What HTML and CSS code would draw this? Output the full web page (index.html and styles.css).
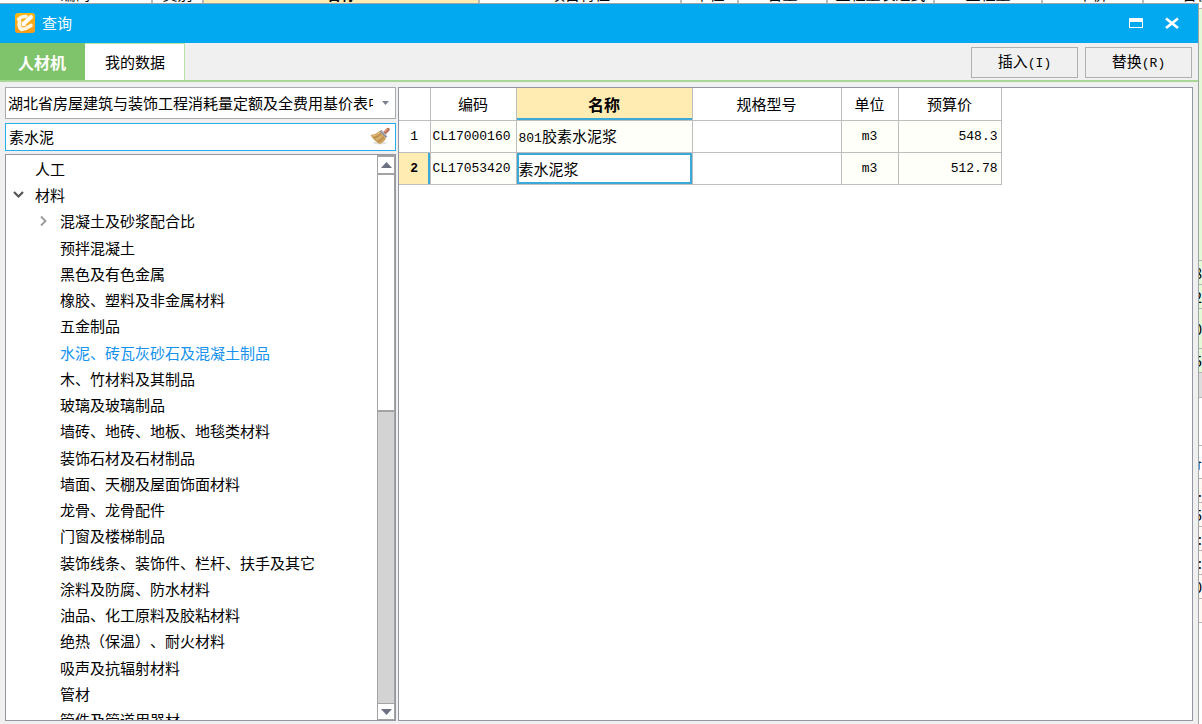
FILE: index.html
```html
<!DOCTYPE html>
<html lang="zh-CN">
<head>
<meta charset="utf-8">
<title>查询</title>
<link rel="stylesheet" href="styles.css">
</head>
<body>
<div class="desktop">
  <div class="sheet-head" aria-hidden="true">
    <span class="w-code">编码</span><span class="w-kind">类别</span><span class="w-name active">名称</span><span class="w-feature">项目特征</span><span class="w-unit">单位</span><span class="w-amount">含量</span><span class="w-expr">工程量表达式</span><span class="w-qty">工程量</span><span class="w-price">单价</span><span class="w-total">合价</span>
  </div>
  <div class="workspace">
    <section class="dialog" aria-labelledby="dialog-title">
      <header class="titlebar">
        <svg class="app-icon" viewBox="0 0 20 20" aria-hidden="true">
          <defs><linearGradient id="g" x1="0" y1="0" x2="0" y2="1"><stop offset="0" stop-color="#fdb813"/><stop offset="1" stop-color="#f79a1c"/></linearGradient></defs>
          <rect width="20" height="20" rx="3" fill="url(#g)"/>
          <path d="M11 3.500Q7 3 3.500 6Q5.500 8 4 12Q4.500 15 6.500 16.500Q11 16 16 12.500" fill="none" stroke="#fff6e0" stroke-width="3.600" stroke-linecap="round" stroke-linejoin="round"/>
          <path d="M9 10.500L16 4" stroke="#fff" stroke-width="4" stroke-linecap="round"/>
          <path d="M7 8.500l-.5 5 5-1z" fill="#fff"/>
        </svg>
        <h1 id="dialog-title">查询</h1>
        <div class="window-buttons">
          <button type="button" aria-label="最大化"><svg viewBox="0 0 14 14"><path d="M0 2h14v10H0zM1 6v5h12V6z" fill="#fff" fill-rule="evenodd"/></svg></button>
          <button type="button" aria-label="关闭"><svg viewBox="0 0 14 14"><path d="M1 2.500l12 9.500M13 2.500l-12 9.500" stroke="#fff" stroke-width="2.800"/></svg></button>
        </div>
      </header>
      <nav class="toolbar">
        <button type="button" class="tab selected">人材机</button>
        <button type="button" class="tab">我的数据</button>
        <div class="actions">
          <button type="button">插入<span class="mono">(I)</span></button>
          <button type="button">替换<span class="mono">(R)</span></button>
        </div>
      </nav>
      <main class="content">
        <aside class="sidebar">
          <div class="combo">
            <select aria-label="定额库"><option>湖北省房屋建筑与装饰工程消耗量定额及全费用基价表中</option></select>
            <svg class="caret" viewBox="0 0 7 4" aria-hidden="true"><path d="M0 0h7L3.500 4z" fill="#7c8090"/></svg>
          </div>
          <div class="search">
            <input type="text" value="素水泥" aria-label="搜索">
            <button type="button" aria-label="清除">
              <svg viewBox="0 0 20 20">
                <ellipse cx="10" cy="16" rx="7" ry="1.500" fill="#e2e2e2"/>
                <path d="M14 6.500L18 2.500" stroke="#b86a50" stroke-width="3.400" stroke-linecap="round"/>
                <path d="M14.500 5l3-3" stroke="#dda080" stroke-width="1.200"/>
                <path d="M.5 8Q6 7.500 9.500 4L16 11Q14.500 15 9.500 17Q4 14 .5 8z" fill="#cda05c"/>
                <path d="M4 11q4-1 7-4.500M8 14.500q4-1.500 6-4.500" stroke="#a87d42" fill="none" stroke-width=".7"/>
                <path d="M2.500 9q4-.5 7.500-3.500M6 12.500q4-1.500 6.500-4.500" stroke="#e6c387" fill="none"/>
                <path d="M10.500 3.500l6 6.500" stroke="#858a92" stroke-width="2.200"/>
                <path d="M11.200 3.500l5.300 5.500" stroke="#d3d6da"/>
              </svg>
            </button>
          </div>
          <div class="tree-box">
            <ul class="tree">
              <li>人工</li>
              <li class="branch"><svg class="arrow" viewBox="0 0 12 12" aria-hidden="true"><path d="M1 3l4.500 4.500L10 3" fill="none" stroke="#555" stroke-width="2.200"/></svg>材料</li>
              <li class="sub"><svg class="arrow" viewBox="0 0 12 12" aria-hidden="true"><path d="M3 1.500L7.500 6 3 10.500" fill="none" stroke="#999" stroke-width="1.800"/></svg>混凝土及砂浆配合比</li>
              <li class="sub">预拌混凝土</li>
              <li class="sub">黑色及有色金属</li>
              <li class="sub">橡胶、塑料及非金属材料</li>
              <li class="sub">五金制品</li>
              <li class="sub current">水泥、砖瓦灰砂石及混凝土制品</li>
              <li class="sub">木、竹材料及其制品</li>
              <li class="sub">玻璃及玻璃制品</li>
              <li class="sub">墙砖、地砖、地板、地毯类材料</li>
              <li class="sub">装饰石材及石材制品</li>
              <li class="sub">墙面、天棚及屋面饰面材料</li>
              <li class="sub">龙骨、龙骨配件</li>
              <li class="sub">门窗及楼梯制品</li>
              <li class="sub">装饰线条、装饰件、栏杆、扶手及其它</li>
              <li class="sub">涂料及防腐、防水材料</li>
              <li class="sub">油品、化工原料及胶粘材料</li>
              <li class="sub">绝热（保温）、耐火材料</li>
              <li class="sub">吸声及抗辐射材料</li>
              <li class="sub">管材</li>
              <li class="sub">管件及管道用器材</li>
            </ul>
            <div class="scrollbar">
              <button type="button" aria-label="向上滚动"><svg viewBox="0 0 11 6"><path d="M0 6L5.500 0 11 6z" fill="#6c7182"/></svg></button>
              <div class="track"><div class="thumb"></div></div>
              <button type="button" aria-label="向下滚动"><svg viewBox="0 0 11 6"><path d="M0 0h11L5.500 6z" fill="#6c7182"/></svg></button>
            </div>
          </div>
        </aside>
        <div class="results">
          <table>
            <colgroup><col class="c-no"><col class="c-code"><col class="c-name"><col class="c-spec"><col class="c-unit"><col class="c-price"></colgroup>
            <thead><tr><th></th><th>编码</th><th class="active">名称</th><th>规格型号</th><th>单位</th><th>预算价</th></tr></thead>
            <tbody>
              <tr><th scope="row">1</th><td class="mono">CL17000160</td><td><span class="mono">801</span>胶素水泥浆</td><td class="blank"></td><td class="mono unit">m3</td><td class="mono price">548.3</td></tr>
              <tr><th scope="row" class="active">2</th><td class="mono">CL17053420</td><td class="focused">素水泥浆</td><td class="blank"></td><td class="mono unit">m3</td><td class="mono price">512.78</td></tr>
            </tbody>
          </table>
        </div>
      </main>
    </section>
    <div class="sheet-edge" aria-hidden="true">
      <div class="e-head"></div><div class="e-tall green"></div><div class="e-row green">8</div><div class="e-row green">2</div><div class="e-mid green">0</div><div class="e-row green">5</div><div class="e-bar"></div><div class="e-gap"></div><div class="e-title">备</div><div class="e-row warm">.</div><div class="e-row warm">5</div><div class="e-row warm">:</div><div class="e-row warm">:</div><div class="e-row warm">0</div><div class="e-row warm"></div>
    </div>
  </div>
</div>
</body>
</html>
```
FILE: styles.css
```css
* { box-sizing: border-box; }
body {
  margin: 0;
  color: #000;
  font: 15px/20px "Noto Sans CJK SC", sans-serif;
  text-spacing-trim: space-all;
}
button, input, select { margin: 0; padding: 0; border: 0; border-radius: 0; background: none; color: inherit; font: inherit; }
svg { display: block; }
.mono { font-family: "Liberation Mono", "Noto Sans CJK SC", monospace; font-size: 13px; }

.desktop { display: flex; flex-direction: column; height: 100vh; overflow: hidden; }
.sheet-head { display: flex; flex: none; height: 3px; overflow: hidden; background: #fff; }
.sheet-head span { display: flex; flex: none; align-items: flex-end; justify-content: center; border-right: 2px solid #bbb; white-space: nowrap; line-height: 19px; }
.sheet-head .active { background: #ffecb3; font-weight: bold; }
.w-code { width: 153px; }
.w-kind { width: 51px; }
.w-name { width: 276px; }
.w-feature { width: 202px; }
.w-unit { width: 57px; }
.w-amount { width: 89px; }
.w-expr { width: 107px; }
.w-qty { width: 108px; }
.w-price { width: 101px; }
.w-total { width: 108px; }

.workspace { display: flex; flex: 1; min-height: 0; }
.dialog { display: flex; flex: 1; flex-direction: column; min-width: 0; border: 1px solid #a0a4a8; border-bottom: 0; border-left: 0; background: #f0f0f0; }
.titlebar { display: flex; flex: none; align-items: center; height: 39px; padding: 0 19px 2px 15px; background: #02a9f1; color: #fff; }
.app-icon { width: 20px; height: 20px; margin-right: 7px; }
.titlebar h1 { margin: 0; font-size: 15px; font-weight: normal; }
.window-buttons { display: flex; gap: 22px; margin-left: auto; }
.window-buttons svg { width: 14px; height: 14px; }

.toolbar { display: flex; flex: none; height: 39px; border-bottom: 2px solid #a9d799; }
.tab { padding: 0 19px 0 20px; border: 1px solid #b5e4a2; border-width: 1px 1px 0 0; background: #fff; }
.tab.selected { padding: 0 18px; border-color: #7fc36b; background: #7fc36b; color: #fff; font-size: 16px; font-weight: bold; }
.actions { display: flex; gap: 7px; margin: 4px 6px 2px auto; }
.actions button { width: 107px; border: 1px solid #b0b0b0; }

.content { display: flex; flex: 1; gap: 2px; min-height: 0; padding: 5px 5px 3px; }
.sidebar { display: flex; flex: none; flex-direction: column; width: 391px; }
.combo { display: grid; flex: none; grid-template-columns: 1fr 22px; align-items: center; height: 32px; border: 1px solid #a8abb0; background: #fff; }
.combo select { width: 100%; min-width: 0; height: 28px; padding-left: 2px; appearance: none; overflow: hidden; outline: 0; }
.caret { width: 7px; height: 4px; margin-left: 9px; }
.search { display: flex; flex: none; align-items: center; height: 28px; margin: 4px 0 3px; padding-right: 5px; border: 1px solid #27aeeb; background: #fff; }
.search input { flex: 1; min-width: 0; padding-left: 3px; outline: 0; }
.search svg { width: 20px; height: 20px; }
.tree-box { display: flex; flex: 1; min-height: 0; border: 1px solid #9397a3; background: #fff; }
.tree { flex: 1; min-width: 0; margin: 0; padding: 1px 0 0; overflow: hidden; list-style: none; }
.tree li { display: flex; align-items: center; height: 26px; padding-left: 29px; white-space: nowrap; }
.tree li:nth-child(4n) { height: 27px; }
.tree .sub { padding-left: 54px; }
.tree .current { color: #1492ee; }
.arrow { flex: none; width: 12px; height: 12px; margin: 0 10px 0 -22px; }
.scrollbar { display: flex; flex: none; flex-direction: column; width: 18px; border: 1px solid #a3a3a3; border-top-width: 2px; background: #d3d3d3; }
.scrollbar button { display: grid; flex: none; place-items: center; height: 16px; background: #fff; }
.scrollbar button:last-child { border-top: 1px solid #a3a3a3; }
.scrollbar svg { width: 11px; height: 6px; }
.track { flex: 1; }
.thumb { height: 45%; border: 1px solid #a3a3a3; border-width: 2px 0; background: #fff; }

.results { flex: 1; min-width: 0; border: 1px solid #9397a3; background: #fff; }
table { width: 602px; border-collapse: collapse; table-layout: fixed; }
.c-no { width: 31px; }
.c-code { width: 86px; }
.c-name { width: 176px; }
.c-spec { width: 149px; }
.c-unit { width: 57px; }
.c-price { width: 103px; }
th, td { padding: 0; border: 1px solid #bdbdbd; font-weight: normal; white-space: nowrap; }
tr > :first-child { border-left: 0; }
thead th { height: 32px; border-top: 0; }
thead .active { background: #ffecb3; box-shadow: inset 0 -2px #3ba9d8; font-size: 16px; font-weight: bold; }
tbody th, td { height: 32px; padding-top: 2px; }
tbody th { font-family: "Liberation Mono", monospace; font-size: 13px; }
tbody .active { background: #ffecb3; box-shadow: inset -2px 0 #3ba9d8; font-weight: bold; }
td { padding-left: 2px; background: #fffffa; }
td.blank { background: #fff; }
.unit { padding-left: 0; text-align: center; }
.price { padding-right: 3px; text-align: right; }
td.focused { background: #fff; box-shadow: inset 0 0 0 2px #3ba9d8; }

.sheet-edge { flex: none; width: 3px; overflow: hidden; background: #fff; }
.sheet-edge div { display: flex; align-items: center; justify-content: flex-end; overflow: hidden; border-bottom: 1px solid #b5b5b5; }
.sheet-edge .green { background: #e2fbd6; }
.sheet-edge .warm { background: #fff8f3; }
.e-head { height: 6px; }
.e-tall { height: 252px; }
.e-row { height: 24px; }
.e-mid { height: 40px; }
.e-bar { height: 25px; background: #ddd; }
.e-gap { height: 48px; }
.e-title { height: 33px; }
```
